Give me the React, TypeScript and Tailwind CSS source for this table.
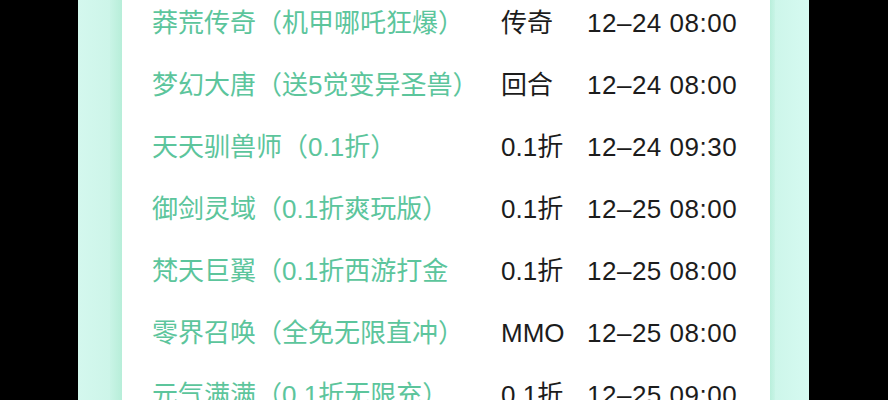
const games = [
  { name: "莽荒传奇（机甲哪吒狂爆）", type: "传奇", time: "12–24 08:00" },
  { name: "梦幻大唐（送5觉变异圣兽）", type: "回合", time: "12–24 08:00" },
  { name: "天天驯兽师（0.1折）", type: "0.1折", time: "12–24 09:30" },
  { name: "御剑灵域（0.1折爽玩版）", type: "0.1折", time: "12–25 08:00" },
  { name: "梵天巨翼（0.1折西游打金", type: "0.1折", time: "12–25 08:00" },
  { name: "零界召唤（全免无限直冲）", type: "MMO", time: "12–25 08:00" },
  { name: "元气满满（0.1折无限充）", type: "0.1折", time: "12–25 09:00" },
];

export default function App() {
  return (
    <div className="w-[888px] h-[400px] bg-black overflow-hidden">
      <div className="ml-[78px] w-[731px] h-full flex bg-gradient-to-r from-[#d2f7ec] via-[#d6f9ef] to-[#d2f7ec]">
        <div className="w-[32px] h-full bg-gradient-to-r from-[#d4f8ee] to-[#cdf5e9]" />
        <div className="w-[12px] h-full bg-gradient-to-r from-[#c9f4e6] to-[#b7eed9]" />
        <div className="flex-1 h-full bg-white overflow-hidden">
          <div
            className="-mt-[8px] pl-[30px] flex flex-col"
            style={{ fontFamily: '"Liberation Sans", "Noto Sans CJK SC", sans-serif' }}
          >
            {games.map((g, i) => (
              <div key={i} className="h-[62px] flex items-center text-[26px] whitespace-nowrap">
                <span className="w-[349px] text-[#5cc59c]">{g.name}</span>
                <span className="w-[86px] text-[#1c1c1c]">{g.type}</span>
                <span className="text-[#1c1c1c] tracking-[0.5px]">{g.time}</span>
              </div>
            ))}
          </div>
        </div>
        <div className="w-[5px] h-full bg-gradient-to-r from-[#b9efdb] to-[#c8f4e6]" />
        <div className="w-[34px] h-full bg-gradient-to-r from-[#cdf6ea] to-[#d6faf1]" />
      </div>
    </div>
  );
}
